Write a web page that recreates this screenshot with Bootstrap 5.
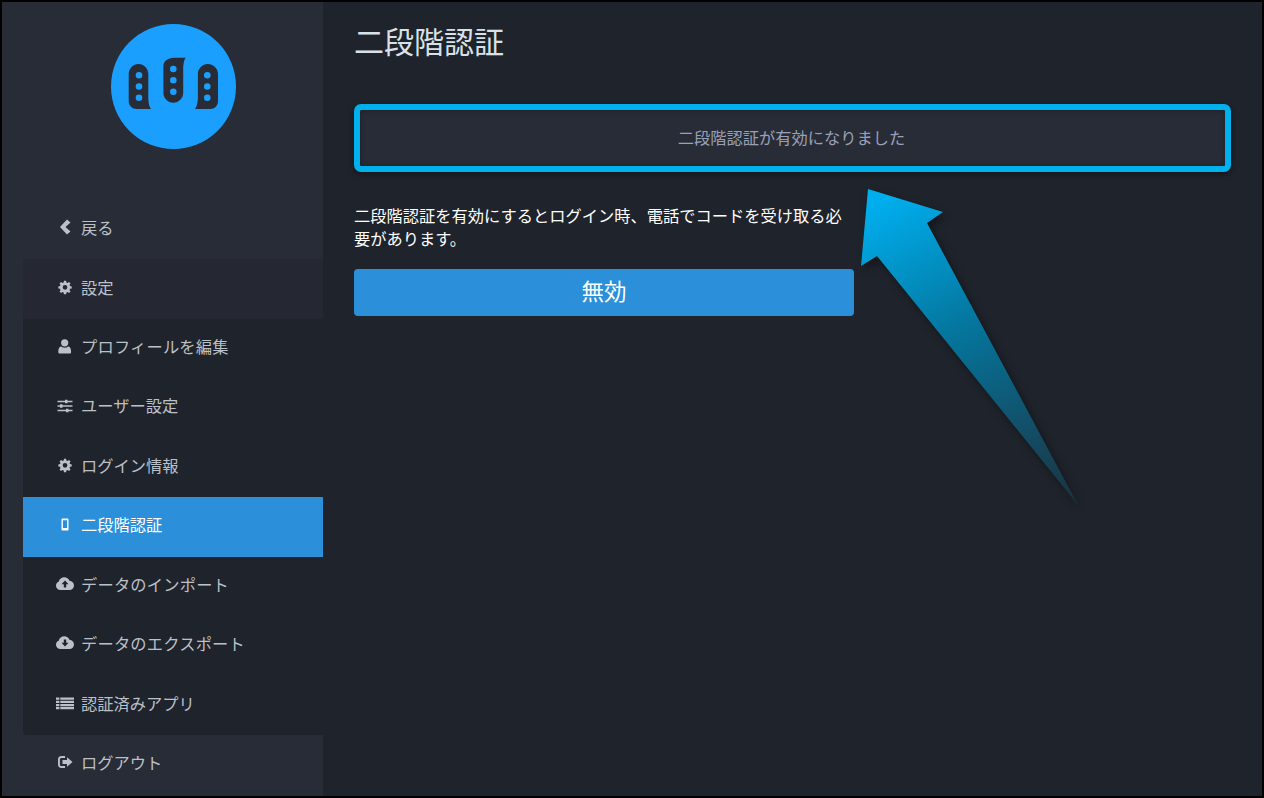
<!DOCTYPE html>
<html lang="ja">
<head>
<meta charset="utf-8">
<title>二段階認証</title>
<link href="https://cdn.jsdelivr.net/npm/bootstrap@5.3.0/dist/css/bootstrap.min.css" rel="stylesheet">
<style>
html,body{height:100%;margin:0;background:#1f232b}
body{font-family:"Noto Sans CJK JP","Liberation Sans",sans-serif;font-size:16.25px;overflow:hidden}
.frame{position:relative;width:1264px;height:798px;border:2px solid #000;background:#1f232b;overflow:hidden}
.side{width:321px;flex:none;background:#282c37;padding-top:22px;overflow:hidden}
.logo-box{height:125px;margin-left:109px;margin-bottom:51px}
.logo-box svg{display:block}
.menu-link{display:flex;align-items:center;height:59.45px;color:#bcc0c8;padding:0 0 5px 33px;text-decoration:none;line-height:1}
.menu-link svg{width:18px;height:16px;flex:none;margin-right:7px;fill:#bcc0c8}
.kana-wide{letter-spacing:.2px}
.top-link{margin-left:21px}
.grp{margin-left:21px;background:#1f232b;border-radius:0 0 0 4px}
.grp .head{background:#252833}
.grp .on{background:#2b90d9;color:#fff}
.grp .on svg{fill:#fff}
.content{flex:1;padding:0 31px 0 31px;min-width:0}
.ttl{font-size:30px;font-weight:400;color:#d9e1e8;line-height:1;margin:23px 0 49px 0}
.notice{height:68px;border:6px solid #00b0ec;border-radius:7px;background:#282c37;color:#9aa0b8;box-shadow:0 2px 6px rgba(0,0,0,.45),inset 0 0 6px rgba(0,0,0,.3);display:flex;align-items:center;justify-content:center;padding:0 2px 2px 0;margin-bottom:32px}
.hint{width:500px;color:#fff;line-height:23px;margin:0 0 19px 0}
.off{width:500px;height:47px;background:#2b90d9;border:0;border-radius:4px;color:#fff;font-size:22.5px;padding:0 0 4px;line-height:1}
.off:hover,.off:active{background:#2b90d9;color:#fff}
.arrow{position:absolute;left:0;top:0;pointer-events:none;filter:drop-shadow(3px 4px 4px rgba(0,0,0,.4))}
</style>
</head>
<body>
<div class="frame d-flex">
  <nav class="side">
    <div class="logo-box">
      <svg width="125" height="125" viewBox="0 0 125 125">
        <circle cx="62.5" cy="62.5" r="62.5" fill="#1a9fff"/>
        <path d="M27.500 40c5.400 0 9.800 4.500 9.800 10v23c0 5 1 10 2.700 12H26c-5 0-8.300-3.500-8.300-8V50c0-5.500 4.400-10 9.800-10z" fill="#282c37"/>
        <path d="M63 33.700h11.700c-1.700 2-2.500 7-2.500 12v23c0 5.500-4.400 10-9.900 10s-9.900-4.500-9.900-10V42c0-4.500 4-8.300 10.600-8.300z" fill="#282c37"/>
        <path d="M96.800 40c-5.400 0-9.900 4.500-9.900 10v23c0 5-1.200 10-2.900 12h15c5 0 8-3.500 8-8V50c0-5.500-4.700-10-10.200-10z" fill="#282c37"/>
        <g fill="#1a9fff">
          <circle cx="28" cy="51.300" r="3.300"/><circle cx="28" cy="62.500" r="3.300"/><circle cx="28" cy="73.700" r="3.300"/>
          <circle cx="62.300" cy="45" r="3.300"/><circle cx="62.300" cy="56.300" r="3.300"/><circle cx="62.300" cy="67.700" r="3.300"/>
          <circle cx="96.300" cy="51.300" r="3.300"/><circle cx="96.300" cy="62.500" r="3.300"/><circle cx="96.300" cy="73.700" r="3.300"/>
        </g>
      </svg>
    </div>
    <a class="menu-link top-link" href="#"><svg viewBox="0 0 18 16"><path d="M11 .5l3.500 3-5 4.500 5 4.500-3.500 3L4 8z"/></svg>戻る</a>
    <div class="grp">
      <a class="menu-link head" href="#"><svg viewBox="0 0 18 16"><path fill-rule="evenodd" d="M7.800 1h2.400l.4 2 1.300.5 1.700-1.100 1.700 1.700-1.100 1.700.5 1.300 2 .4v2.400l-2 .4-.5 1.300 1.100 1.700-1.700 1.700-1.700-1.100-1.300.5-.4 2H7.800l-.4-2-1.300-.5-1.700 1.100-1.700-1.700 1.100-1.700-.5-1.300-2-.4V7.500l2-.4.500-1.300-1.100-1.700 1.700-1.700 1.700 1.100 1.300-.5zM9 5.800a2.700 2.700 0 1 0 0 5.400 2.700 2.700 0 0 0 0-5.400z" transform="translate(1.200 .9) scale(.87)"/></svg>設定</a>
      <a class="menu-link kana-wide" href="#"><svg viewBox="0 0 18 16"><circle cx="8.700" cy="4.800" r="3.600"/><path d="M3.500 15.500c-.8 0-1.200-.6-1.200-1.500 0-3 .8-5.500 3-5.500 1 .8 2 1.200 3.400 1.200s2.400-.4 3.400-1.200c2.200 0 3 2.500 3 5.500 0 .9-.4 1.500-1.200 1.500z"/></svg>プロフィールを編集</a>
      <a class="menu-link" href="#"><svg viewBox="0 0 18 16"><path d="M1.500 2.800H9V1.800h2.500v1H16.500v1.500H11.500v1H9v-1H1.500zM1.500 7.300h2.500v-1h2.500v1H16.500v1.500H6.500v1H4v-1H1.500zM1.500 11.800H10v-1h2.500v1h4v1.500h-4v1H10v-1H1.500z"/></svg>ユーザー設定</a>
      <a class="menu-link" href="#"><svg viewBox="0 0 18 16"><path fill-rule="evenodd" d="M7.800 1h2.400l.4 2 1.300.5 1.700-1.100 1.700 1.700-1.100 1.700.5 1.300 2 .4v2.400l-2 .4-.5 1.300 1.100 1.700-1.700 1.700-1.700-1.100-1.300.5-.4 2H7.800l-.4-2-1.300-.5-1.700 1.100-1.700-1.700 1.100-1.700-.5-1.300-2-.4V7.500l2-.4.500-1.300-1.100-1.700 1.700-1.700 1.700 1.100 1.300-.5zM9 5.800a2.700 2.700 0 1 0 0 5.400 2.700 2.700 0 0 0 0-5.400z" transform="translate(1.200 .9) scale(.87)"/></svg>ログイン情報</a>
      <a class="menu-link on" href="#"><svg viewBox="0 0 18 16"><path fill-rule="evenodd" d="M6.600 2.500h4.800c.7 0 1.100.5 1.100 1.100v9.800c0 .6-.4 1.100-1.100 1.100H6.600c-.7 0-1.100-.5-1.100-1.100V3.600c0-.6.400-1.100 1.100-1.100zM6.900 4.300v7.700h4.200V4.300z"/></svg>二段階認証</a>
      <a class="menu-link kana-wide" href="#"><svg viewBox="0 0 18 16"><path fill-rule="evenodd" d="M4.500 14C2 14 0 12.200 0 9.700 0 7.900 1 6.400 2.700 5.800 3.300 3 5.700 1.300 8.300 1.300c2.300 0 4.300 1.300 5.200 3.400 2.600.1 4.500 2.100 4.500 4.700S16 14 13.500 14zM9 4.500 5.500 8.200h2.300v3.300h2.400V8.200h2.300z"/></svg>データのインポート</a>
      <a class="menu-link kana-wide" href="#"><svg viewBox="0 0 18 16"><path fill-rule="evenodd" d="M4.500 14C2 14 0 12.200 0 9.700 0 7.900 1 6.400 2.700 5.800 3.300 3 5.700 1.300 8.300 1.300c2.300 0 4.300 1.300 5.200 3.400 2.600.1 4.500 2.100 4.500 4.700S16 14 13.500 14zM9 11.500l3.500-3.700h-2.300V4.500H7.800v3.300H5.500z"/></svg>データのエクスポート</a>
      <a class="menu-link" href="#"><svg viewBox="0 0 18 16"><path d="M0 2.500h3.400v2.300H0zM4.300 2.500H18v2.300H4.300zM0 5.700h3.400V8H0zM4.300 5.700H18V8H4.300zM0 8.900h3.400v2.300H0zM4.300 8.900H18v2.300H4.300zM0 12h3.400v2.300H0zM4.300 12H18v2.300H4.300z"/></svg>認証済みアプリ</a>
    </div>
    <a class="menu-link top-link" href="#"><svg viewBox="0 0 18 16"><path fill-rule="evenodd" d="M5.500 2H9v1.900H5.500C4.500 3.900 3.900 4.500 3.900 5.500v5c0 1 .6 1.600 1.600 1.600H9V14H5.500C3.300 14 2 12.700 2 10.500v-5C2 3.300 3.300 2 5.500 2zM11 3.200 16.500 8 11 12.800V10H6.500V6H11z"/></svg>ログアウト</a>
  </nav>
  <main class="content">
    <h1 class="ttl">二段階認証</h1>
    <div class="notice">二段階認証が有効になりました</div>
    <p class="hint">二段階認証を有効にするとログイン時、電話でコードを受け取る必要があります。</p>
    <button type="button" class="btn off d-block">無効</button>
  </main>
  <svg class="arrow" width="1260" height="794" viewBox="2 2 1260 794">
    <defs><linearGradient id="ag" gradientUnits="userSpaceOnUse" x1="890" y1="195" x2="1050" y2="505"><stop offset="0" stop-color="#00aeee"/><stop offset=".42" stop-color="#04779f"/><stop offset="1" stop-color="#1b3544"/></linearGradient></defs>
    <polygon points="868,189 943,212 927,223 1078,505 877,256 861,266" fill="url(#ag)"/>
  </svg>
</div>
</body>
</html>
